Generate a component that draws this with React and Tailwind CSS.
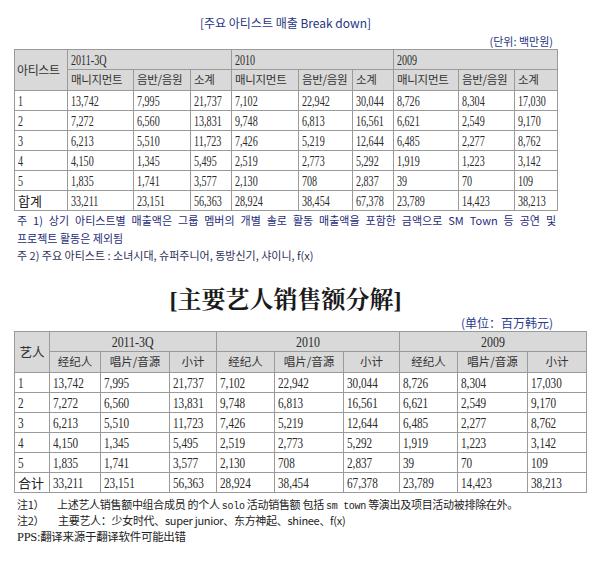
import React from "react";

const data = [
  ["13,742", "7,995", "21,737", "7,102", "22,942", "30,044", "8,726", "8,304", "17,030"],
  ["7,272", "6,560", "13,831", "9,748", "6,813", "16,561", "6,621", "2,549", "9,170"],
  ["6,213", "5,510", "11,723", "7,426", "5,219", "12,644", "6,485", "2,277", "8,762"],
  ["4,150", "1,345", "5,495", "2,519", "2,773", "5,292", "1,919", "1,223", "3,142"],
  ["1,835", "1,741", "3,577", "2,130", "708", "2,837", "39", "70", "109"],
];
const total = ["33,211", "23,151", "56,363", "28,924", "38,454", "67,378", "23,789", "14,423", "38,213"];
const years = ["2011-3Q", "2010", "2009"];

const kr = "font-['Noto_Sans_CJK_KR',sans-serif]";
const sc = "font-['Noto_Sans_CJK_SC',sans-serif]";
const serif = "font-['Liberation_Serif',serif]";

// base cell, alignment added per use
const base = "border border-[#9a9a9a] py-0 leading-none font-normal whitespace-nowrap overflow-hidden";
const cell = `${base} px-[3px] text-left`;
const mid = `${base} px-0 text-center`;

const Num = ({ children, wide }) => (
  <span
    className={`${serif} inline-block origin-left text-[14px] text-[#2a2a2a] ${
      wide ? "scale-x-[0.8]" : "scale-x-[0.72]"
    }`}
  >
    {children}
  </span>
);

const TopTable = () => (
  <table className="ml-[14px] w-[543px] table-fixed border-collapse">
    <colgroup>
      <col className="w-[53px]" />
      <col className="w-[66px]" />
      <col className="w-[57px]" />
      <col className="w-[41px]" />
      <col className="w-[67px]" />
      <col className="w-[54px]" />
      <col className="w-[41px]" />
      <col className="w-[65px]" />
      <col className="w-[56px]" />
      <col className="w-[43px]" />
    </colgroup>
    <thead>
      <tr className="h-[20px] bg-[#d9d9d9]">
        <th rowSpan={2} className={`${base} pl-[2px] pr-0 text-left ${kr} text-[12px] tracking-[-0.4px] text-[#333]`}>
          아티스트
        </th>
        {years.map((y) => (
          <th key={y} colSpan={3} className={cell}>
            <Num>{y}</Num>
          </th>
        ))}
      </tr>
      <tr className="h-[21px] bg-[#d9d9d9]">
        {years.map((y) => (
          <React.Fragment key={y}>
            <th className={`${base} pl-[3px] text-left ${kr} text-[11.5px] tracking-[-0.3px] text-[#333]`}>매니지먼트</th>
            <th className={`${base} pl-[3px] text-left ${kr} text-[11.5px] tracking-[-0.3px] text-[#333]`}>음반/음원</th>
            <th className={`${base} pl-[3px] text-left ${kr} text-[11.5px] tracking-[-0.3px] text-[#333]`}>소계</th>
          </React.Fragment>
        ))}
      </tr>
    </thead>
    <tbody>
      {data.map((r, i) => (
        <tr key={i} className="h-[20px]">
          <td className={cell}>
            <Num>{i + 1}</Num>
          </td>
          {r.map((v, j) => (
            <td key={j} className={cell}>
              <Num>{v}</Num>
            </td>
          ))}
        </tr>
      ))}
      <tr className="h-[20px]">
        <td className={`${cell} ${kr} text-[13px] text-[#222]`}>합계</td>
        {total.map((v, j) => (
          <td key={j} className={cell}>
            <Num>{v}</Num>
          </td>
        ))}
      </tr>
    </tbody>
  </table>
);

const BottomTable = () => (
  <table className="ml-[14px] w-[572px] table-fixed border-collapse">
    <colgroup>
      <col className="w-[35px]" />
      <col className="w-[51px]" />
      <col className="w-[69px]" />
      <col className="w-[47px]" />
      <col className="w-[58px]" />
      <col className="w-[69px]" />
      <col className="w-[56px]" />
      <col className="w-[58px]" />
      <col className="w-[70px]" />
      <col className="w-[59px]" />
    </colgroup>
    <thead>
      <tr className="h-[20px] bg-[#d9d9d9]">
        <th rowSpan={2} className={`${mid} ${sc} text-[12.5px] text-[#333]`}>
          艺人
        </th>
        {years.map((y) => (
          <th key={y} colSpan={3} className={mid}>
            <span className={`${serif} inline-block scale-x-[0.85] text-[14px] text-[#2a2a2a]`}>{y}</span>
          </th>
        ))}
      </tr>
      <tr className="h-[21px] bg-[#d9d9d9]">
        {years.map((y) => (
          <React.Fragment key={y}>
            <th className={`${mid} ${sc} text-[11.5px] text-[#333]`}>经纪人</th>
            <th className={`${mid} ${sc} text-[11.5px] text-[#333]`}>唱片/音源</th>
            <th className={`${mid} ${sc} text-[11.5px] text-[#333]`}>小计</th>
          </React.Fragment>
        ))}
      </tr>
    </thead>
    <tbody>
      {data.map((r, i) => (
        <tr key={i} className="h-[20px]">
          <td className={cell}>
            <Num wide>{i + 1}</Num>
          </td>
          {r.map((v, j) => (
            <td key={j} className={cell}>
              <Num wide>{v}</Num>
            </td>
          ))}
        </tr>
      ))}
      <tr className="h-[20px]">
        <td className={`${cell} ${sc} text-[13px] text-[#222]`}>合计</td>
        {total.map((v, j) => (
          <td key={j} className={cell}>
            <Num wide>{v}</Num>
          </td>
        ))}
      </tr>
    </tbody>
  </table>
);

export default function App() {
  return (
    <div className="w-[600px] h-[561px] overflow-hidden bg-white">
      <div className="pt-[15px]">
        <div className={`${kr} ml-[14px] h-[16px] w-[543px] text-center text-[12px] leading-[16px] text-[#26367e]`}>
          [주요 아티스트 매출 Break down]
        </div>
        <div className={`${kr} mt-[3px] h-[15px] w-[553px] text-right text-[11px] leading-[15px] text-[#26367e]`}>
          (단위: 백만원)
        </div>
      </div>

      <TopTable />

      <div className={`${kr} pl-[17px] w-[556px] text-[11px] text-[#1f2b78]`}>
        <div className="h-[18px] leading-[18px] whitespace-nowrap text-justify [text-align-last:justify]">
          주 1) 상기 아티스트별 매출액은 그룹 멤버의 개별 솔로 활동 매출액을 포함한 금액으로 SM Town 등 공연 및
        </div>
        <div className="h-[18px] leading-[18px]">프로젝트 활동은 제외됨</div>
        <div className="h-[17px] leading-[17px] text-[#2c2f57]">
          주 2) 주요 아티스트 : 소녀시대, 슈퍼주니어, 동방신기, 샤이니, f(x)
        </div>
      </div>

      <div className="mt-[21px] ml-[14px] h-[30px] w-[543px] text-center font-['Liberation_Serif','Noto_Serif_CJK_SC','Noto_Sans_CJK_SC',serif] text-[24px] font-bold leading-[30px] text-[#1a1a1a]">
        [主要艺人销售额分解]
      </div>
      <div className={`${sc} h-[16px] w-[553px] text-right text-[12px] leading-[16px] text-[#2b3b8f]`}>
        (单位：百万韩元)
      </div>

      <BottomTable />

      <div className={`${sc} mt-[3px] pl-[17px] text-[11px] leading-[16px] tracking-[-0.3px] text-[#222]`}>
        <div className="flex h-[16px]">
          <span className="w-[40px]">注1）</span>
          <span>
            上述艺人销售额中组合成员 的个人{" "}
            <span className="font-['Liberation_Mono',monospace] text-[10px]">solo</span> 活动销售额 包括{" "}
            <span className="font-['Liberation_Mono',monospace] text-[10px]">sm town</span> 等演出及项目活动被排除在外。
          </span>
        </div>
        <div className="flex h-[16px]">
          <span className="w-[41px]">注2）</span>
          <span>主要艺人：少女时代、super junior、东方神起、shinee、f(x)</span>
        </div>
        <div className="h-[16px] text-[11.5px]">
          <span className={`${serif} text-[12.5px]`}>PPS:</span>翻译来源于翻译软件可能出错
        </div>
      </div>
    </div>
  );
}
